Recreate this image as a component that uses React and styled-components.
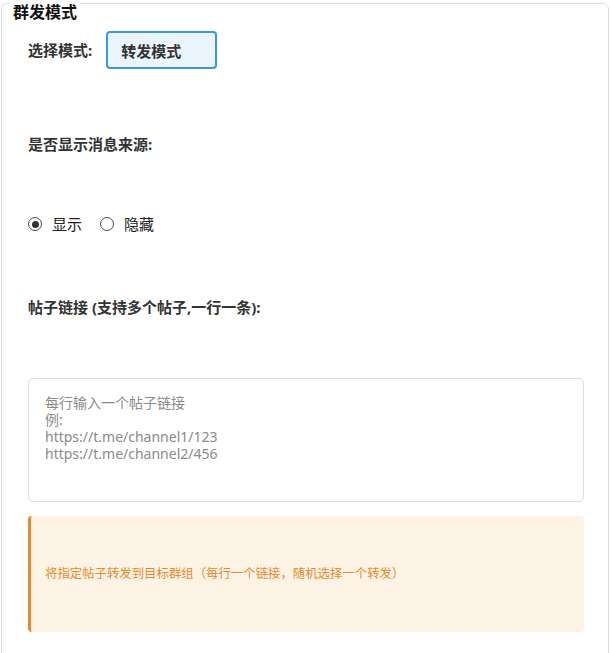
import React, { useState } from "react";
import styled, { createGlobalStyle } from "styled-components";

const Global = createGlobalStyle`
  html, body { margin: 0; padding: 0; background: #fff; }
  body {
    font-family: "Noto Sans", "Noto Sans CJK SC", sans-serif;
    color: #333;
  }
  * { box-sizing: border-box; }
`;

const Card = styled.section`
  margin: 3px 1px 0 1px;
  border: 1px solid #dcdcdc;
  border-radius: 6px;
  padding: 0 24px 30px 26px;
  min-height: 660px;
  display: flex;
  flex-direction: column;
`;

const Legend = styled.h2`
  align-self: flex-start;
  margin: -2px 0 0 -18px;
  padding: 0 3px;
  background: #fff;
  font-size: 16px;
  line-height: 20px;
  font-weight: 700;
  color: #111;
`;

const Row = styled.div`
  display: flex;
  align-items: center;
  gap: ${(p) => p.$gap || 0}px;
  margin-top: ${(p) => p.$mt || 0}px;
`;

const Label = styled.label`
  display: block;
  font-size: 15px;
  line-height: 20px;
  font-weight: 700;
  color: #333;
  margin-top: ${(p) => p.$mt || 0}px;
`;

const ModeSelect = styled.div`
  width: 111px;
  height: 38px;
  border: 2px solid #3d97dc;
  border-radius: 4px;
  background: #eaf5fd;
  display: flex;
  align-items: center;
  padding-left: 13px;
  font-size: 15px;
  font-weight: 700;
  color: #333;
`;

const RadioLabel = styled.label`
  display: flex;
  align-items: center;
  gap: 10px;
  font-size: 15px;
  line-height: 20px;
  color: #222;
  cursor: pointer;
`;

const Radio = styled.input`
  appearance: none;
  margin: 0;
  width: 14px;
  height: 14px;
  border-radius: 50%;
  border: 1.5px solid #4a4a4a;
  background: #fff;
  display: grid;
  place-items: center;
  &:checked::after {
    content: "";
    width: 7px;
    height: 7px;
    border-radius: 50%;
    background: #333;
  }
`;

const TextArea = styled.textarea`
  display: block;
  width: 100%;
  height: 124px;
  margin-top: 61px;
  border: 1px solid #dcdcdc;
  border-radius: 5px;
  padding: 15px 16px;
  font-family: "Noto Sans", "Noto Sans CJK SC", sans-serif;
  font-size: 14px;
  line-height: 17px;
  color: #333;
  resize: none;
  outline: none;
  &::placeholder { color: #8a8a8a; }
`;

const Notice = styled.div`
  margin-top: 14px;
  height: 116px;
  display: flex;
  align-items: center;
  padding: 0 16px 0 14px;
  background: #fef4e6;
  border-left: 3px solid #e8892c;
  border-radius: 4px;
  font-size: 12.4px;
  line-height: 16px;
  color: #e8892c;
`;

export default function App() {
  const [show, setShow] = useState(true);
  return (
    <>
      <Global />
      <Card>
        <Legend>群发模式</Legend>
        <Row $mt={9} $gap={14}>
          <Label>选择模式:</Label>
          <ModeSelect>转发模式</ModeSelect>
        </Row>
        <Label $mt={65}>是否显示消息来源:</Label>
        <Row $mt={60} $gap={18}>
          <RadioLabel>
            <Radio type="radio" name="src" checked={show} onChange={() => setShow(true)} />
            显示
          </RadioLabel>
          <RadioLabel>
            <Radio type="radio" name="src" checked={!show} onChange={() => setShow(false)} />
            隐藏
          </RadioLabel>
        </Row>
        <Label $mt={63}>帖子链接 (支持多个帖子,一行一条):</Label>
        <TextArea placeholder={"每行输入一个帖子链接\n例:\nhttps://t.me/channel1/123\nhttps://t.me/channel2/456"} />
        <Notice>将指定帖子转发到目标群组（每行一个链接，随机选择一个转发）</Notice>
      </Card>
    </>
  );
}
